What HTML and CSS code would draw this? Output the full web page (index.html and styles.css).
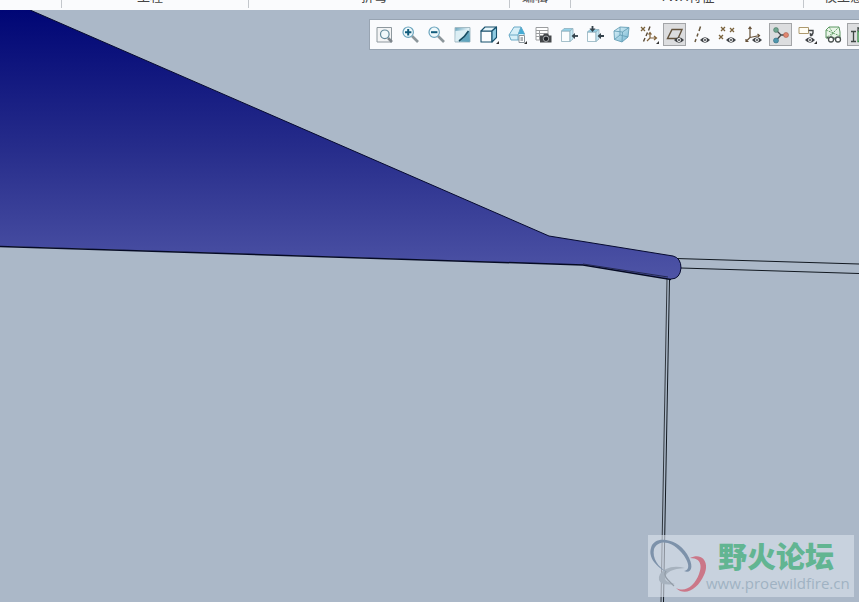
FILE: index.html
```html
<!DOCTYPE html>
<html lang="zh-CN">
<head>
    <meta charset="UTF-8">
    <meta name="viewport" content="width=device-width, initial-scale=1.0">
    <title>模型视图</title>
    <link rel="stylesheet" href="styles.css">
</head>
<body>

    <!-- Bottom edge of the ribbon -->
    <header class="ribbon">
        <div class="ribbon-group first"></div>
        <div class="ribbon-group project">工程</div>
        <div class="ribbon-group bend">折弯</div>
        <div class="ribbon-group edit">编辑</div>
        <div class="ribbon-group twx">TWX特征</div>
        <div class="ribbon-group intent">模型意图</div>
    </header>

    <main class="viewport">
        <svg class="model" viewBox="0 0 859 592" preserveAspectRatio="xMinYMin slice" aria-hidden="true">
            <defs>
                <linearGradient id="body-fill" gradientUnits="userSpaceOnUse" x1="0" y1="0" x2="0" y2="268">
                    <stop offset="0" stop-color="#000675"/>
                    <stop offset="0.5" stop-color="#252b8a"/>
                    <stop offset="1" stop-color="#4e54a6"/>
                </linearGradient>
            </defs>
            <g fill="none" stroke="#111820" stroke-width="1">
                <path d="M676 248.500L859 254M681 258L859 263.500"/>
                <path d="M669.500 269L663.500 592"/>
                <path d="M667 269L661 592" stroke="#30363e"/>
            </g>
            <path d="M0 0H30L549 226L673 246Q681 248 681 258Q680 269 671 269L583 255L0 236Z" fill="url(#body-fill)"/>
            <path d="M30 0L549 226L673 246Q681 248 681 258Q680 269 671 269" fill="none" stroke="#060a30"/>
            <path d="M0 236.500L583 255L671 269.500" fill="none" stroke="#050a24" stroke-width="1.500"/>
            <path d="M583 254L668 267" fill="none" stroke="#252a50"/>
        </svg>

        <!-- Shared icon parts -->
        <svg class="defs" width="0" height="0" aria-hidden="true">
            <defs>
                <linearGradient id="glass" x1="0" y1="0" x2="1" y2="1">
                    <stop offset="0" stop-color="#e5f6fc"/>
                    <stop offset="1" stop-color="#6fb4d0"/>
                </linearGradient>
                <linearGradient id="shade" x1="0" y1="0" x2="1" y2="1">
                    <stop offset="0" stop-color="#5e9eb8"/>
                    <stop offset="0.5" stop-color="#e4f3f8"/>
                    <stop offset="1" stop-color="#1b7ba0"/>
                </linearGradient>
                <symbol id="eye" viewBox="0 0 10 6" overflow="visible">
                    <path d="M0 3Q5-2.500 10 3Q5 8.500 0 3Z" fill="#414448"/>
                    <circle cx="5" cy="3" r="1.900" fill="#fff"/>
                    <circle cx="5" cy="3" r="1" fill="#414448"/>
                </symbol>
                <symbol id="more" viewBox="0 0 3 3">
                    <path d="M3 0V3H0Z" fill="#333"/>
                </symbol>
                <symbol id="cross" viewBox="0 0 4 4" overflow="visible">
                    <path d="M0 0L4 4M4 0L0 4" fill="none" stroke="#7a623c" stroke-width="1.300"/>
                </symbol>
            </defs>
        </svg>

        <div class="toolbar" role="toolbar" aria-label="视图工具">
            <div class="tool-group">
                <button type="button" class="tool" aria-label="重新调整">
                    <svg viewBox="0 0 21 21"><path d="M3 3.500H17.500V18H3Z" fill="#f3f4f5" stroke="#8e989e"/><path d="M14 14L18 18" stroke="#7e868c" stroke-width="2.500"/><circle cx="10.800" cy="10.300" r="4.300" fill="#eff8fb" stroke="#628a9b" stroke-width="1.200"/></svg>
                </button>
                <button type="button" class="tool" aria-label="放大">
                    <svg viewBox="0 0 21 21"><path d="M12 12L18 18" stroke="#8c969b" stroke-width="2.600"/><circle cx="8.200" cy="8.200" r="5.200" fill="#eff9fc" stroke="#6ba4bd" stroke-width="1.200"/><path d="M5 8.200H11.400M8.200 5V11.400" stroke="#125c7c" stroke-width="2"/></svg>
                </button>
                <button type="button" class="tool" aria-label="缩小">
                    <svg viewBox="0 0 21 21"><path d="M12 12L18 18" stroke="#8c969b" stroke-width="2.600"/><circle cx="8.200" cy="8.200" r="5.200" fill="#eff9fc" stroke="#6ba4bd" stroke-width="1.200"/><path d="M5 8.200H11.400" stroke="#125c7c" stroke-width="2"/></svg>
                </button>
                <button type="button" class="tool" aria-label="重画">
                    <svg viewBox="0 0 21 21"><path d="M3 3.500H18V18H3Z" fill="url(#shade)" stroke="#a4bbc5"/><path d="M3.500 7L16 6L7 17H3.500Z" fill="#dceef4"/><path d="M17.500 7V17.500H8Q14 13 17.500 7Z" fill="#62a5be"/><path d="M16.500 7Q13 13 7 17" fill="none" stroke="#184d63" stroke-width="1.600"/></svg>
                </button>
                <button type="button" class="tool" aria-label="显示样式">
                    <svg viewBox="0 0 21 21"><g stroke="#17516d" stroke-width="1.100" stroke-linejoin="round"><path d="M3 7H14V18H3Z" fill="#fafdfe"/><path d="M3 7L7 3H18.500L14 7Z" fill="#e6f5fa"/><path d="M14 7L18.500 3V13.500L14 18Z" fill="#8fcbe2"/></g><use href="#more" x="18" y="17" width="3" height="3"/></svg>
                </button>
            </div>
            <div class="tool-group">
                <button type="button" class="tool" aria-label="已保存方向">
                    <svg viewBox="0 0 21 21"><path d="M3 11L8 3H15L18.500 10L14 16H5Z" fill="#d7eff8" stroke="#6aa9c6"/><path d="M12 10L15 3L18.500 10Z" fill="#45abd4"/><path d="M3 11H12L15 3M12 11V16" fill="none" stroke="#6aa9c6"/><path d="M13 11.500H18.500V18.500H13Z" fill="#fff" stroke="#8b959b"/><path d="M14.500 14H17M14.500 16H17" stroke="#59656c"/><use href="#more" x="18" y="17" width="3" height="3"/></svg>
                </button>
                <button type="button" class="tool" aria-label="视图管理器">
                    <svg viewBox="0 0 21 21"><path d="M4 3.500H16V16H4ZM4 6.500H16M4 9.500H16M4 12.500H10M7.500 6.500V16" fill="#fff" stroke="#9b9d9f"/><path d="M8 11.500H11L12 9.800H16L17 11.500H19.500V18.500H8Z" fill="#45484b"/><circle cx="14" cy="14.800" r="2.700" fill="#202327" stroke="#c2c5c8" stroke-width="0.800"/></svg>
                </button>
                <button type="button" class="tool" aria-label="右侧视图">
                    <svg viewBox="0 0 21 21"><g stroke="#8fb0be" stroke-width="0.800"><path d="M3.500 7H12V17.500H3.500Z" fill="#fafdfe"/><path d="M3.500 7L6 4.500H15L12 7Z" fill="#91d2e9"/><path d="M12 7L15 4.500V15L12 17.500Z" fill="#c5e8f3"/></g><path d="M15 12H20" stroke="#34434c" stroke-width="1.800"/><path d="M13.500 12L17 9V15Z" fill="#34434c"/></svg>
                </button>
                <button type="button" class="tool" aria-label="顶部视图">
                    <svg viewBox="0 0 21 21"><g stroke="#8fb0be" stroke-width="0.800"><path d="M3.500 8H12V17.500H3.500Z" fill="#fafdfe"/><path d="M3.500 8L6 5.500H15L12 8Z" fill="#91d2e9"/><path d="M12 8L15 5.500V15L12 17.500Z" fill="#c5e8f3"/></g><path d="M15 12H20M8.500 2V6" stroke="#34434c" stroke-width="1.800"/><path d="M13.500 12L17 9V15ZM8.500 8L5.500 4.500H11.500Z" fill="#34434c"/></svg>
                </button>
                <button type="button" class="tool" aria-label="透视图">
                    <svg viewBox="0 0 21 21"><g stroke="#669fb7" stroke-width="0.900" stroke-linejoin="round"><path d="M4 7L10 3L19 3.500L18 13L12 18L4.500 15.500Z" fill="url(#glass)"/><path d="M4 7L12.500 8L19 3.500M12.500 8L12 18M10 3V11L4.500 15.500M10 11L18 13" fill="none"/></g></svg>
                </button>
            </div>
            <div class="tool-group">
                <button type="button" class="tool" aria-label="基准显示过滤器">
                    <svg viewBox="0 0 21 21"><use href="#cross" x="3" y="3" width="4" height="4"/><path d="M12 2.500L10.500 6.500M9.500 8.500L8 12M7 14L5.500 17.500" stroke="#594a37" stroke-width="1.400"/><path d="M12 9V14H18M12 14L9 17M10.500 10.500L12 8.500L13.500 10.500M16 12L18.500 14L16 16" fill="none" stroke="#80623a" stroke-width="1.200"/><use href="#more" x="18" y="17" width="3" height="3"/></svg>
                </button>
                <button type="button" class="tool" aria-label="平面显示" aria-pressed="true">
                    <svg viewBox="0 0 21 21"><path d="M8 5.500H18L14 14.500H3.500Z" fill="none" stroke="#63533e" stroke-width="1.400"/><use href="#eye" x="10" y="13" width="10" height="6"/></svg>
                </button>
                <button type="button" class="tool" aria-label="轴显示">
                    <svg viewBox="0 0 21 21"><path d="M10.500 2.500L9 7M8 9.500L7 12.500M6 15L5 18" stroke="#69583e" stroke-width="1.500"/><use href="#eye" x="10" y="13" width="10" height="6"/></svg>
                </button>
                <button type="button" class="tool" aria-label="点显示">
                    <svg viewBox="0 0 21 21"><use href="#cross" x="5" y="3" width="4" height="4"/><use href="#cross" x="14" y="4" width="4" height="4"/><use href="#cross" x="3" y="11" width="4" height="4"/><use href="#eye" x="10" y="13" width="10" height="6"/></svg>
                </button>
                <button type="button" class="tool" aria-label="坐标系显示">
                    <svg viewBox="0 0 21 21"><path d="M8 3V13.500L4 17.500M8 13.500L17.500 11.500M6.500 5L8 3L9.500 5M15.500 10L17.500 11.500L16 13M4 15V17.500H6.500" fill="none" stroke="#665138" stroke-width="1.200"/><use href="#eye" x="10" y="13" width="10" height="6"/></svg>
                </button>
            </div>
            <div class="tool-group">
                <button type="button" class="tool" aria-label="旋转中心" aria-pressed="true">
                    <svg viewBox="0 0 21 21"><path d="M6 6L11 11L6 16.500M11 11H16" fill="none" stroke="#42494c" stroke-width="1.300"/><circle cx="6" cy="6" r="2.400" fill="#6fa590" stroke="#47745f" stroke-width="0.600"/><circle cx="16" cy="11" r="2.500" fill="#e08670" stroke="#a95e4d" stroke-width="0.600"/><circle cx="6" cy="16.500" r="2.500" fill="#4f96ad" stroke="#326c80" stroke-width="0.600"/></svg>
                </button>
                <button type="button" class="tool" aria-label="注释显示">
                    <svg viewBox="0 0 21 21"><path d="M3 3.500H12.500V9.500H3Z" fill="#fffdf4" stroke="#ad996e"/><path d="M12.500 6.500H17V9L15 12" fill="none" stroke="#44474a" stroke-width="1.400"/><path d="M13.500 8.500L14 12.500L17.500 11Z" fill="#44474a"/><use href="#eye" x="9" y="13" width="10" height="6"/><use href="#more" x="18" y="17" width="3" height="3"/></svg>
                </button>
                <button type="button" class="tool" aria-label="模拟显示">
                    <svg viewBox="0 0 21 21"><path d="M4 6L7 3H17L18 8V14H4Z" fill="#e9f5e8" stroke="#5c9863"/><path d="M4 6L11 9L17 3M11 9L8 14M11 9L18 12M7 3L11 9L4 14" fill="none" stroke="#67a26b" stroke-width="1" stroke-dasharray="2 1"/><circle cx="9" cy="15.500" r="2.500" fill="#fff" stroke="#4a5250" stroke-width="1.300"/><circle cx="16" cy="15.500" r="2.500" fill="#fff" stroke="#4a5250" stroke-width="1.300"/><path d="M6.500 15L5 12.500M11.500 15H13.500" stroke="#4a5250"/></svg>
                </button>
                <button type="button" class="tool" aria-label="尺寸显示" aria-pressed="true">
                    <svg viewBox="0 0 21 21"><path d="M3 7.500H8M3 17.500H8M5.500 7.500V17.500" stroke="#3f4744" stroke-width="1.300"/><path d="M10 7.500H20V17.500H10Z" fill="#dcefd9" stroke="#3b8c48" stroke-width="1.300"/><path d="M10 3V7M10 4.500H20" stroke="#3f4744" stroke-width="1.300"/></svg>
                </button>
            </div>
        </div>

        <aside class="watermark">
            <svg class="watermark-logo" viewBox="0 0 58 62" aria-hidden="true">
                <path d="M37 33Q26 30 18 34Q10 38 11 45Q13 51 27 49Q17 47 17 43Q18 34 37 33Z" fill="#a7b2be"/>
                <path d="M3 13C6 0 29 3 39 19C47 32 43 39 36 36C43 35 41 26 33 17C22 5 10 5 6 14C4 23 10 32 19 37C8 32 0 22 3 13Z" fill="#7d92aa"/>
                <path d="M42 23C54 17 62 27 56 40C50 54 37 62 28 53C38 58 47 50 51 39C55 28 51 23 42 23Z" fill="#cb7788"/>
                <path d="M18 36Q15 40 20 45L26 51" fill="none" stroke="#929ca7" stroke-width="1.200"/>
            </svg>
            <div class="watermark-text">
                <strong class="watermark-name">野火论坛</strong>
                <span class="watermark-url">www.proewildfire.cn</span>
            </div>
        </aside>
    </main>

</body>
</html>
```
FILE: styles.css
```css
/* Basic Reset */
* {
    margin: 0;
    padding: 0;
    box-sizing: border-box;
}

body {
    font-family: "Liberation Sans", "Noto Sans CJK SC", sans-serif;
    background: #abb8c8;
    color: #444;
    display: flex;
    flex-direction: column;
    height: 100vh;
    overflow: hidden;
}

/* Ribbon group captions */
.ribbon {
    display: flex;
    align-items: flex-end;
    flex: none;
    height: 10px;
    padding-bottom: 2px;
    background: #fafbfd;
    overflow: hidden;
}

.ribbon-group {
    flex: none;
    height: 20px;
    padding-right: 10px;
    border-right: 1px solid #c3c7cc;
    font-size: 13px;
    line-height: 18px;
    text-align: center;
    white-space: nowrap;
}

.first {
    width: 62px;
}

.project {
    width: 187px;
}

.bend {
    width: 261px;
}

.edit {
    width: 61px;
}

.twx {
    width: 233px;
    padding-right: 0;
}

.intent {
    flex: 1;
    padding-left: 20px;
    border-right: none;
    text-align: left;
}

/* Graphics area */
.viewport {
    position: relative;
    flex: 1;
    min-height: 0;
    overflow: hidden;
}

.model {
    display: block;
    width: 100%;
    height: 100%;
}

.defs {
    position: absolute;
}

/* Floating view toolbar */
.toolbar {
    position: absolute;
    top: 9px;
    left: 369px;
    display: flex;
    gap: 5px;
    padding: 3px;
    background: #fafbfd;
    border: 1px solid #98a4b2;
}

.tool-group {
    display: flex;
    gap: 3px;
}

.tool {
    display: block;
    width: 23px;
    height: 23px;
    background: none;
    border: 1px solid transparent;
}

.tool:hover {
    background: #e8edf2;
}

.tool[aria-pressed="true"] {
    background: #dcdddf;
    border-color: #a3a5a8;
}

.tool svg {
    display: block;
    width: 21px;
    height: 21px;
    overflow: visible;
    fill: none;
}

/* Forum watermark */
.watermark {
    position: absolute;
    right: 5px;
    bottom: 5px;
    display: flex;
    width: 206px;
    height: 62px;
    background: rgba(220, 226, 237, 0.6);
}

.watermark-logo {
    flex: none;
    width: 58px;
    height: 62px;
}

.watermark-text {
    display: flex;
    flex-direction: column;
    padding-top: 4px;
    white-space: nowrap;
}

.watermark-name {
    padding-left: 12px;
    color: #62b592;
    font-family: "Noto Sans CJK SC", sans-serif;
    font-size: 29px;
    font-weight: 900;
    line-height: 32px;
}

.watermark-url {
    color: #a0b2c3;
    font-family: "Open Sans", sans-serif;
    font-size: 15px;
    line-height: 24px;
}
```
